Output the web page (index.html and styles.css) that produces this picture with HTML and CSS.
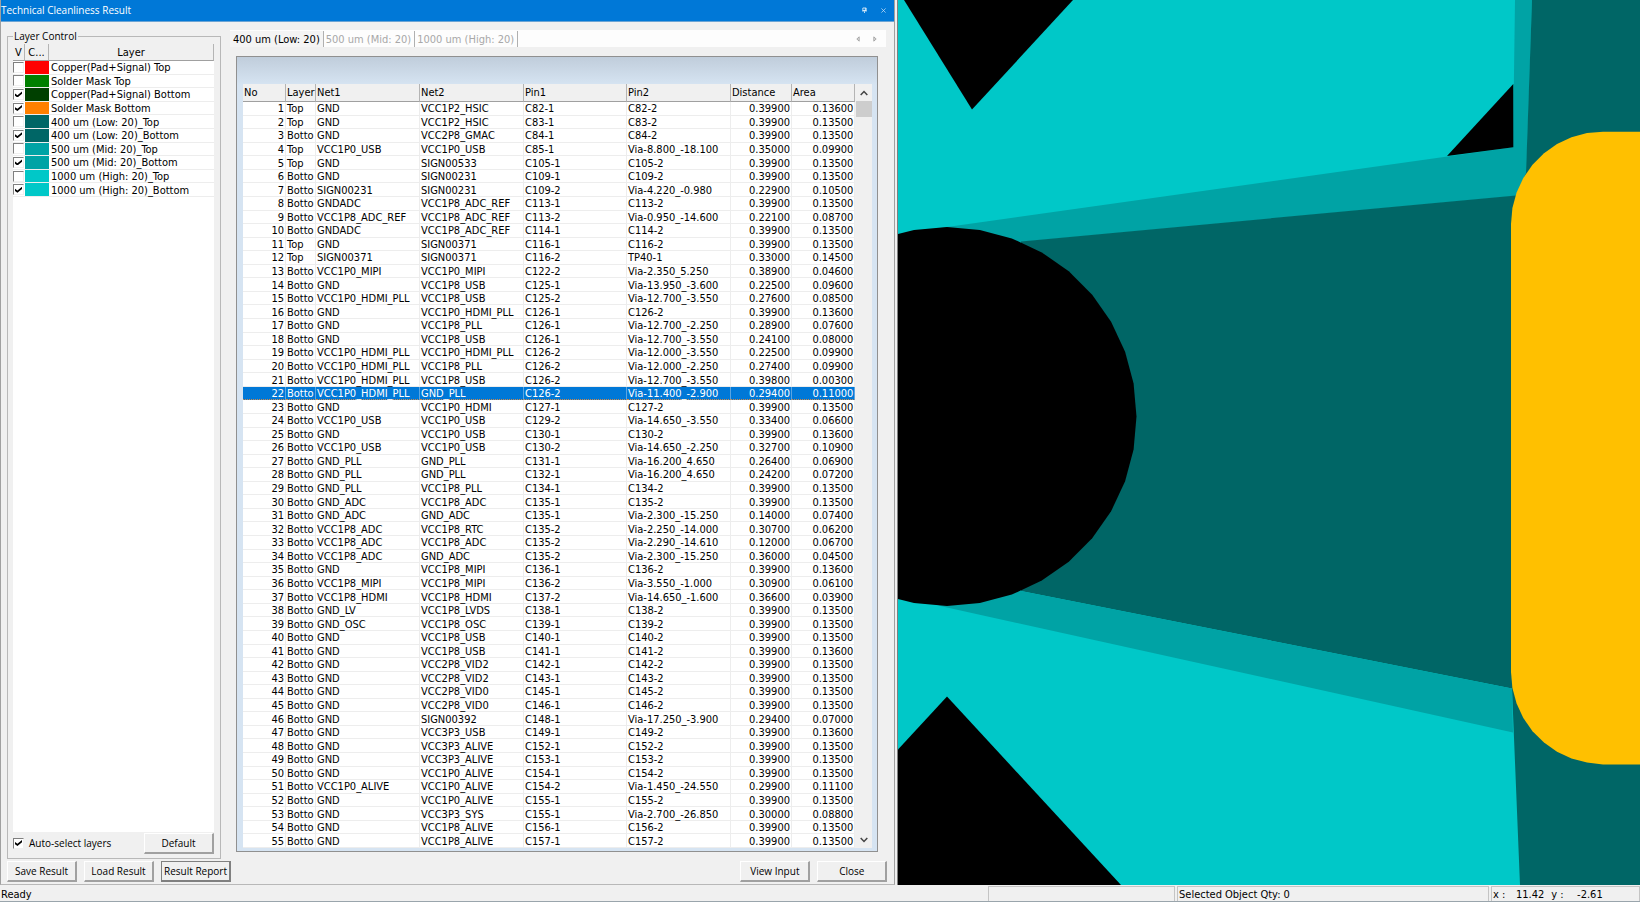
FILE: index.html
```html
<!DOCTYPE html>
<html lang="en">
<head>
<meta charset="utf-8">
<title>Technical Cleanliness Result</title>
<link rel="stylesheet" href="styles.css">
</head>
<body>
<div class="app">
  <main class="workspace">
    <section class="dialog">
      <header class="titlebar">
        <h1 class="title">Technical Cleanliness Result</h1>
        <button class="title-btn" aria-label="Pin"><svg width="5" height="7" viewBox="0 0 6 8"><path d="M1 1h4v3H1zM0 4.500h6M3 5v2M4 1v3" fill="none" stroke="#e4f0fa"/></svg></button>
        <button class="title-btn" aria-label="Close window"><svg width="5" height="5" viewBox="0 0 6 6"><path d="M.5.5l5 5M5.500.5l-5 5" stroke="#c5def4" stroke-width=".9"/></svg></button>
      </header>
      <div class="dialog-body">
        <fieldset class="layers">
          <legend class="layers-title">Layer Control</legend>
          <div class="layer-list">
            <table class="layer-table">
              <colgroup><col class="c-v"><col class="c-color"><col></colgroup>
              <thead><tr><th>V</th><th>C...</th><th>Layer</th></tr></thead>
              <tbody id="layer-rows"></tbody>
            </table>
          </div>
          <div class="layers-foot">
            <label class="auto"><input type="checkbox" class="tick" checked>Auto-select layers</label>
            <button class="btn">Default</button>
          </div>
        </fieldset>
        <div class="results">
          <nav class="tabs">
            <button class="tab tab-active">400 um (Low: 20)</button>
            <button class="tab">500 um (Mid: 20)</button>
            <button class="tab">1000 um (High: 20)</button>
            <span class="tab-arrows">
              <button class="arrow" aria-label="Previous tab"><svg width="4" height="6" viewBox="0 0 5 7"><path d="M4 .8v5.400L1 3.500z" fill="#ddd" stroke="#999"/></svg></button>
              <button class="arrow" aria-label="Next tab"><svg width="4" height="6" viewBox="0 0 5 7"><path d="M1 .8v5.400l3-2.700z" fill="#ddd" stroke="#999"/></svg></button>
            </span>
          </nav>
          <div class="frame">
            <div class="grid-wrap">
              <table class="grid">
                <colgroup><col class="c-no"><col class="c-layer"><col class="c-net"><col class="c-net"><col class="c-pin"><col class="c-net"><col class="c-dist"><col></colgroup>
                <thead><tr><th>No</th><th>Layer</th><th>Net1</th><th>Net2</th><th>Pin1</th><th>Pin2</th><th>Distance</th><th>Area</th></tr></thead>
                <tbody id="result-rows"></tbody>
              </table>
              <div class="scroll">
                <button class="scroll-btn" aria-label="Scroll up"><svg width="8" height="6" viewBox="0 0 8 6"><path d="M.7 5L4 1.500 7.300 5" fill="none" stroke="#444" stroke-width="1.500"/></svg></button>
                <div class="thumb"></div>
                <button class="scroll-btn scroll-down" aria-label="Scroll down"><svg width="8" height="6" viewBox="0 0 8 6"><path d="M.7 1L4 4.500 7.300 1" fill="none" stroke="#444" stroke-width="1.500"/></svg></button>
              </div>
            </div>
          </div>
        </div>
      </div>
      <footer class="actions">
        <button class="btn">Save Result</button>
        <button class="btn">Load Result</button>
        <button class="btn btn-default">Result Report</button>
        <span class="spacer"></span>
        <button class="btn">View Input</button>
        <button class="btn">Close</button>
      </footer>
    </section>
    <section class="board">
      <svg class="board-svg" viewBox="898 0 742 885" preserveAspectRatio="xMinYMin slice" role="img" aria-label="Board view">
        <rect x="898" width="742" height="885" fill="#00c8c8"/>
        <path d="M904 0H1073L972 109.500z" fill="#000"/>
        <path d="M1515 0H1532L1526 180L1516 196L1021 242L940 228L1513 147.300z" fill="#00a3a5"/>
        <path d="M1513.300 84V147.300L1447 156z" fill="#000"/>
        <path d="M1532 0H1640V885H1520L1512 688.500L1021 591V241.500L1516 195.500L1526 173z" fill="#006666"/>
        <path d="M1021 591L1512 688.500L1513 732.500L938 605.500z" fill="#00a3a5"/>
        <path d="M947 227L979.900 230L1011.800 238.400L1041.800 252.400L1068.800 271.300L1092.200 294.700L1111.100 321.700L1125.100 351.700L1133.600 383.600L1136.500 416.500L1133.600 449.400L1125.100 481.300L1111.100 511.300L1092.200 538.300L1068.800 561.700L1041.800 580.600L1011.800 594.600L979.900 603L947 606L914 603L898 599V234L914 230z" fill="#000"/>
        <path d="M898 749.500L947 696.500L1121 885H898z" fill="#000"/>
        <path d="M1640 131.700H1603L1587 133L1571.500 137.300L1557 144L1544 153.300L1532.500 164.800L1523.300 178L1516.600 192.500L1512.400 208L1511 224V672L1512.400 688L1516.600 703.500L1523.300 718L1532.500 731.200L1544 742.500L1557 751.700L1571.500 758.400L1587 762.600L1603 764.500H1640z" fill="#ffc000"/>
      </svg>
    </section>
  </main>
  <footer class="status">
    <span class="status-ready">Ready</span>
    <span class="status-cell status-blank"></span>
    <span class="status-cell status-qty">Selected Object Qty: 0</span>
    <span class="status-cell status-pos"><span>x :</span><span class="num">11.42</span><span>y :</span><span class="num">-2.61</span></span>
  </footer>
</div>
<script src="data.js"></script>
</body>
</html>
```
FILE: styles.css
```css
* { box-sizing: border-box; }
body {
  margin: 0;
  font-family: "DejaVu Sans Condensed", "DejaVu Sans", sans-serif;
  font-size: 11px;
  line-height: 13px;
  color: #000;
  background: #f0f0f0;
}
button { font: inherit; color: inherit; padding: 0; border: 0; background: none; }
.app { height: 100vh; display: flex; flex-direction: column; }
.workspace { flex: 1; min-height: 0; display: flex; }

.dialog {
  flex: 895 1 0;
  min-width: 0;
  display: flex;
  flex-direction: column;
  border-left: 1px solid #a0a0a0;
  border-right: 1px solid #a0a0a0;
  border-bottom: 1px solid #b8b8b8;
}
.titlebar {
  height: 22px;
  display: flex;
  align-items: center;
  gap: 14px;
  padding-right: 8px;
  background: #0078d7;
  border-bottom: 1px solid #6ba4d4;
  color: #fff;
}
.title, .layers-title, .auto, .btn { font-family: "Open Sans", sans-serif; font-size: 10px; font-weight: normal; }
.title { margin: 0 auto 0 0; }
.title-btn { display: flex; }

.dialog-body { flex: 1; min-height: 0; display: flex; padding: 8px 8px 0 6px; gap: 9px; }
.layers {
  width: 214px;
  min-width: 0;
  margin: 0;
  padding: 2px 6px 4px 5px;
  display: flex;
  flex-direction: column;
  border: 1px solid #b8b8b8;
}
.layers-title { padding: 0 1px; line-height: 12px; }
.layer-list { flex: 1; min-height: 0; background: #fff; }
.layer-table { width: 100%; height: 153px; table-layout: fixed; border-collapse: separate; border-spacing: 0; }
.layer-table th {
  height: 17px;
  padding: 1px 0 0;
  font-weight: normal;
  line-height: 15px;
  background: #f0f0f0;
  border-right: 1px solid #b4b4b4;
  border-bottom: 1px solid #a0a0a0;
}
.layer-table td { padding: 1px 0 0 2px; line-height: 11px; white-space: nowrap; border-bottom: 1px solid #ededed; }
.layer-table .cell-tick { padding: 0; line-height: 0; }
.layer-table .cell-color { padding: 0; }
.c-v { width: 12px; }
.c-color { width: 24px; }
.red { background: #ff0000; }
.green { background: #008000; }
.forest { background: #004000; }
.orange { background: #ff8000; }
.teal { background: #006666; }
.mid { background: #00a3a5; }
.cyan { background: #00c8c8; }

.tick {
  appearance: none;
  width: 11px;
  height: 11px;
  margin: 0;
  vertical-align: top;
  background: #fff;
  border: 1px solid #f0f0f0;
  border-top-color: #808080;
  border-left-color: #808080;
  display: inline-grid;
  place-items: center;
}
.tick:checked::before {
  content: "";
  width: 7px;
  height: 6px;
  background: #000;
  clip-path: polygon(0 35%, 35% 62%, 100% 0, 100% 38%, 35% 100%, 0 72%);
}
.layers-foot { height: 22px; display: flex; justify-content: space-between; align-items: center; }
.auto { display: flex; align-items: center; gap: 5px; }

.btn {
  width: 70px;
  height: 21px;
  line-height: 18px;
  white-space: nowrap;
  background: #f0f0f0;
  border: 1px solid #fff;
  border-right: 2px solid #a0a0a0;
  border-bottom: 2px solid #a0a0a0;
}
.btn-default { border: 1px solid #808080; border-right-width: 2px; border-bottom-width: 2px; }
.actions { height: 25px; display: flex; align-items: center; gap: 7px; padding: 0 7px 0 6px; }
.spacer { flex: 1; }

.results { flex: 1; min-width: 0; display: flex; flex-direction: column; }
.tabs { height: 17px; display: flex; align-items: center; background: #fdfdfd; color: #a8a8a8; }
.tab { padding: 1px 3px 0 2px; line-height: 15px; border-right: 1px solid #b0b0b0; white-space: nowrap; }
.tab-active { padding-left: 3px; color: #000; background: #f4f4f4; }
.tab-arrows { margin-left: auto; margin-right: 9px; display: flex; gap: 13px; }
.arrow { display: flex; }

.frame {
  flex: 1;
  min-height: 0;
  margin: 9px 8px 7px 6px;
  padding: 27px 5px 3px 6px;
  display: flex;
  border: 1px solid #909090;
  background: linear-gradient(#c0cddb, #d6e4f2 28px);
}
.grid-wrap { flex: 1; min-width: 0; min-height: 0; display: flex; background: #fff; }
.grid { flex: 1; min-width: 0; height: 100%; table-layout: fixed; border-collapse: separate; border-spacing: 0; }
.grid th {
  height: 18px;
  padding: 1px 0 0 1px;
  font-weight: normal;
  text-align: left;
  line-height: 16px;
  background: #f0f0f0;
  border-right: 1px solid #b4b4b4;
  border-bottom: 1px solid #a0a0a0;
}
.grid td {
  padding: 1px 0 0 1px;
  line-height: 11px;
  white-space: nowrap;
  border-right: 1px solid #ededed;
  border-bottom: 1px solid #ededed;
}
.grid .num { text-align: right; padding: 1px 1px 0 0; }
.grid .selected td { color: #fff; background: #0078d7; border-bottom: 1px dotted #d08848; border-right-color: #5aa5e2; }
.c-no { width: 43px; }
.c-layer { width: 30px; }
.c-net { width: 104px; }
.c-pin { width: 103px; }
.c-dist { width: 61px; }
.scroll { width: 17px; display: flex; flex-direction: column; background: #f0f0f0; }
.scroll-btn { height: 17px; display: grid; place-items: center; }
.thumb { height: 16px; margin-left: 1px; background: #cdcdcd; }
.scroll-down { margin-top: auto; }

.board {
  flex: 743 1 0;
  min-width: 0;
  margin-left: 2px;
  border-left: 1px solid #808080;
  overflow: hidden;
}
.board-svg { display: block; width: 100%; height: 100%; }

.status {
  height: 17px;
  display: flex;
  gap: 2px;
  padding: 1px 0 0 1px;
  border-bottom: 1px solid #9aa5ac;
  line-height: 17px;
}
.status-ready { flex: 1; }
.status-cell { border: 1px solid #c4c4c4; border-bottom: 0; padding-left: 1px; line-height: 15px; }
.status-blank { width: 187px; }
.status-qty { width: 312px; }
.status-pos { width: 149px; display: flex; white-space: nowrap; }
.status-pos .num { width: 39px; text-align: right; margin-right: 7px; }
```
FILE: data.js
```js
const layers = [
  ["Copper(Pad+Signal) Top", "red", false],
  ["Solder Mask Top", "green", false],
  ["Copper(Pad+Signal) Bottom", "forest", true],
  ["Solder Mask Bottom", "orange", true],
  ["400 um (Low: 20)_Top", "teal", false],
  ["400 um (Low: 20)_Bottom", "teal", true],
  ["500 um (Mid: 20)_Top", "mid", false],
  ["500 um (Mid: 20)_Bottom", "mid", true],
  ["1000 um (High: 20)_Top", "cyan", false],
  ["1000 um (High: 20)_Bottom", "cyan", true]
];

const results = `
Top GND VCC1P2_HSIC C82-1 C82-2 0.39900 0.13600
Top GND VCC1P2_HSIC C83-1 C83-2 0.39900 0.13500
Botto GND VCC2P8_GMAC C84-1 C84-2 0.39900 0.13500
Top VCC1P0_USB VCC1P0_USB C85-1 Via-8.800_-18.100 0.35000 0.09900
Top GND SIGN00533 C105-1 C105-2 0.39900 0.13500
Botto GND SIGN00231 C109-1 C109-2 0.39900 0.13500
Botto SIGN00231 SIGN00231 C109-2 Via-4.220_-0.980 0.22900 0.10500
Botto GNDADC VCC1P8_ADC_REF C113-1 C113-2 0.39900 0.13500
Botto VCC1P8_ADC_REF VCC1P8_ADC_REF C113-2 Via-0.950_-14.600 0.22100 0.08700
Botto GNDADC VCC1P8_ADC_REF C114-1 C114-2 0.39900 0.13500
Top GND SIGN00371 C116-1 C116-2 0.39900 0.13500
Top SIGN00371 SIGN00371 C116-2 TP40-1 0.33000 0.14500
Botto VCC1P0_MIPI VCC1P0_MIPI C122-2 Via-2.350_5.250 0.38900 0.04600
Botto GND VCC1P8_USB C125-1 Via-13.950_-3.600 0.22500 0.09600
Botto VCC1P0_HDMI_PLL VCC1P8_USB C125-2 Via-12.700_-3.550 0.27600 0.08500
Botto GND VCC1P0_HDMI_PLL C126-1 C126-2 0.39900 0.13600
Botto GND VCC1P8_PLL C126-1 Via-12.700_-2.250 0.28900 0.07600
Botto GND VCC1P8_USB C126-1 Via-12.700_-3.550 0.24100 0.08000
Botto VCC1P0_HDMI_PLL VCC1P0_HDMI_PLL C126-2 Via-12.000_-3.550 0.22500 0.09900
Botto VCC1P0_HDMI_PLL VCC1P8_PLL C126-2 Via-12.000_-2.250 0.27400 0.09900
Botto VCC1P0_HDMI_PLL VCC1P8_USB C126-2 Via-12.700_-3.550 0.39800 0.00300
Botto VCC1P0_HDMI_PLL GND_PLL C126-2 Via-11.400_-2.900 0.29400 0.11000
Botto GND VCC1P0_HDMI C127-1 C127-2 0.39900 0.13500
Botto VCC1P0_USB VCC1P0_USB C129-2 Via-14.650_-3.550 0.33400 0.06600
Botto GND VCC1P0_USB C130-1 C130-2 0.39900 0.13600
Botto VCC1P0_USB VCC1P0_USB C130-2 Via-14.650_-2.250 0.32700 0.10900
Botto GND_PLL GND_PLL C131-1 Via-16.200_4.650 0.26400 0.06900
Botto GND_PLL GND_PLL C132-1 Via-16.200_4.650 0.24200 0.07200
Botto GND_PLL VCC1P8_PLL C134-1 C134-2 0.39900 0.13500
Botto GND_ADC VCC1P8_ADC C135-1 C135-2 0.39900 0.13500
Botto GND_ADC GND_ADC C135-1 Via-2.300_-15.250 0.14000 0.07400
Botto VCC1P8_ADC VCC1P8_RTC C135-2 Via-2.250_-14.000 0.30700 0.06200
Botto VCC1P8_ADC VCC1P8_ADC C135-2 Via-2.290_-14.610 0.12000 0.06700
Botto VCC1P8_ADC GND_ADC C135-2 Via-2.300_-15.250 0.36000 0.04500
Botto GND VCC1P8_MIPI C136-1 C136-2 0.39900 0.13600
Botto VCC1P8_MIPI VCC1P8_MIPI C136-2 Via-3.550_-1.000 0.30900 0.06100
Botto VCC1P8_HDMI VCC1P8_HDMI C137-2 Via-14.650_-1.600 0.36600 0.03900
Botto GND_LV VCC1P8_LVDS C138-1 C138-2 0.39900 0.13500
Botto GND_OSC VCC1P8_OSC C139-1 C139-2 0.39900 0.13500
Botto GND VCC1P8_USB C140-1 C140-2 0.39900 0.13500
Botto GND VCC1P8_USB C141-1 C141-2 0.39900 0.13600
Botto GND VCC2P8_VID2 C142-1 C142-2 0.39900 0.13500
Botto GND VCC2P8_VID2 C143-1 C143-2 0.39900 0.13500
Botto GND VCC2P8_VID0 C145-1 C145-2 0.39900 0.13500
Botto GND VCC2P8_VID0 C146-1 C146-2 0.39900 0.13500
Botto GND SIGN00392 C148-1 Via-17.250_-3.900 0.29400 0.07000
Botto GND VCC3P3_USB C149-1 C149-2 0.39900 0.13600
Botto GND VCC3P3_ALIVE C152-1 C152-2 0.39900 0.13500
Botto GND VCC3P3_ALIVE C153-1 C153-2 0.39900 0.13500
Botto GND VCC1P0_ALIVE C154-1 C154-2 0.39900 0.13500
Botto VCC1P0_ALIVE VCC1P0_ALIVE C154-2 Via-1.450_-24.550 0.29900 0.11100
Botto GND VCC1P0_ALIVE C155-1 C155-2 0.39900 0.13500
Botto GND VCC3P3_SYS C155-1 Via-2.700_-26.850 0.30000 0.08800
Botto GND VCC1P8_ALIVE C156-1 C156-2 0.39900 0.13500
Botto GND VCC1P8_ALIVE C157-1 C157-2 0.39900 0.13500`.trim().split("\n").map(line => line.split(" "));

const selectedNo = 22;

document.getElementById("layer-rows").innerHTML = layers.map(([name, color, on], i) =>
  `<tr><td class="cell-tick"><input type="checkbox" class="tick" id="layer-${i}"${on ? " checked" : ""}></td>` +
  `<td class="cell-color ${color}"></td><td><label for="layer-${i}">${name}</label></td></tr>`).join("");

document.getElementById("result-rows").innerHTML = results.map((cells, i) =>
  `<tr${i + 1 === selectedNo ? ' class="selected"' : ""}><td class="num">${i + 1}</td>` +
  cells.map((text, c) => `<td${c > 4 ? ' class="num"' : ""}>${text}</td>`).join("") + "</tr>").join("");
```
